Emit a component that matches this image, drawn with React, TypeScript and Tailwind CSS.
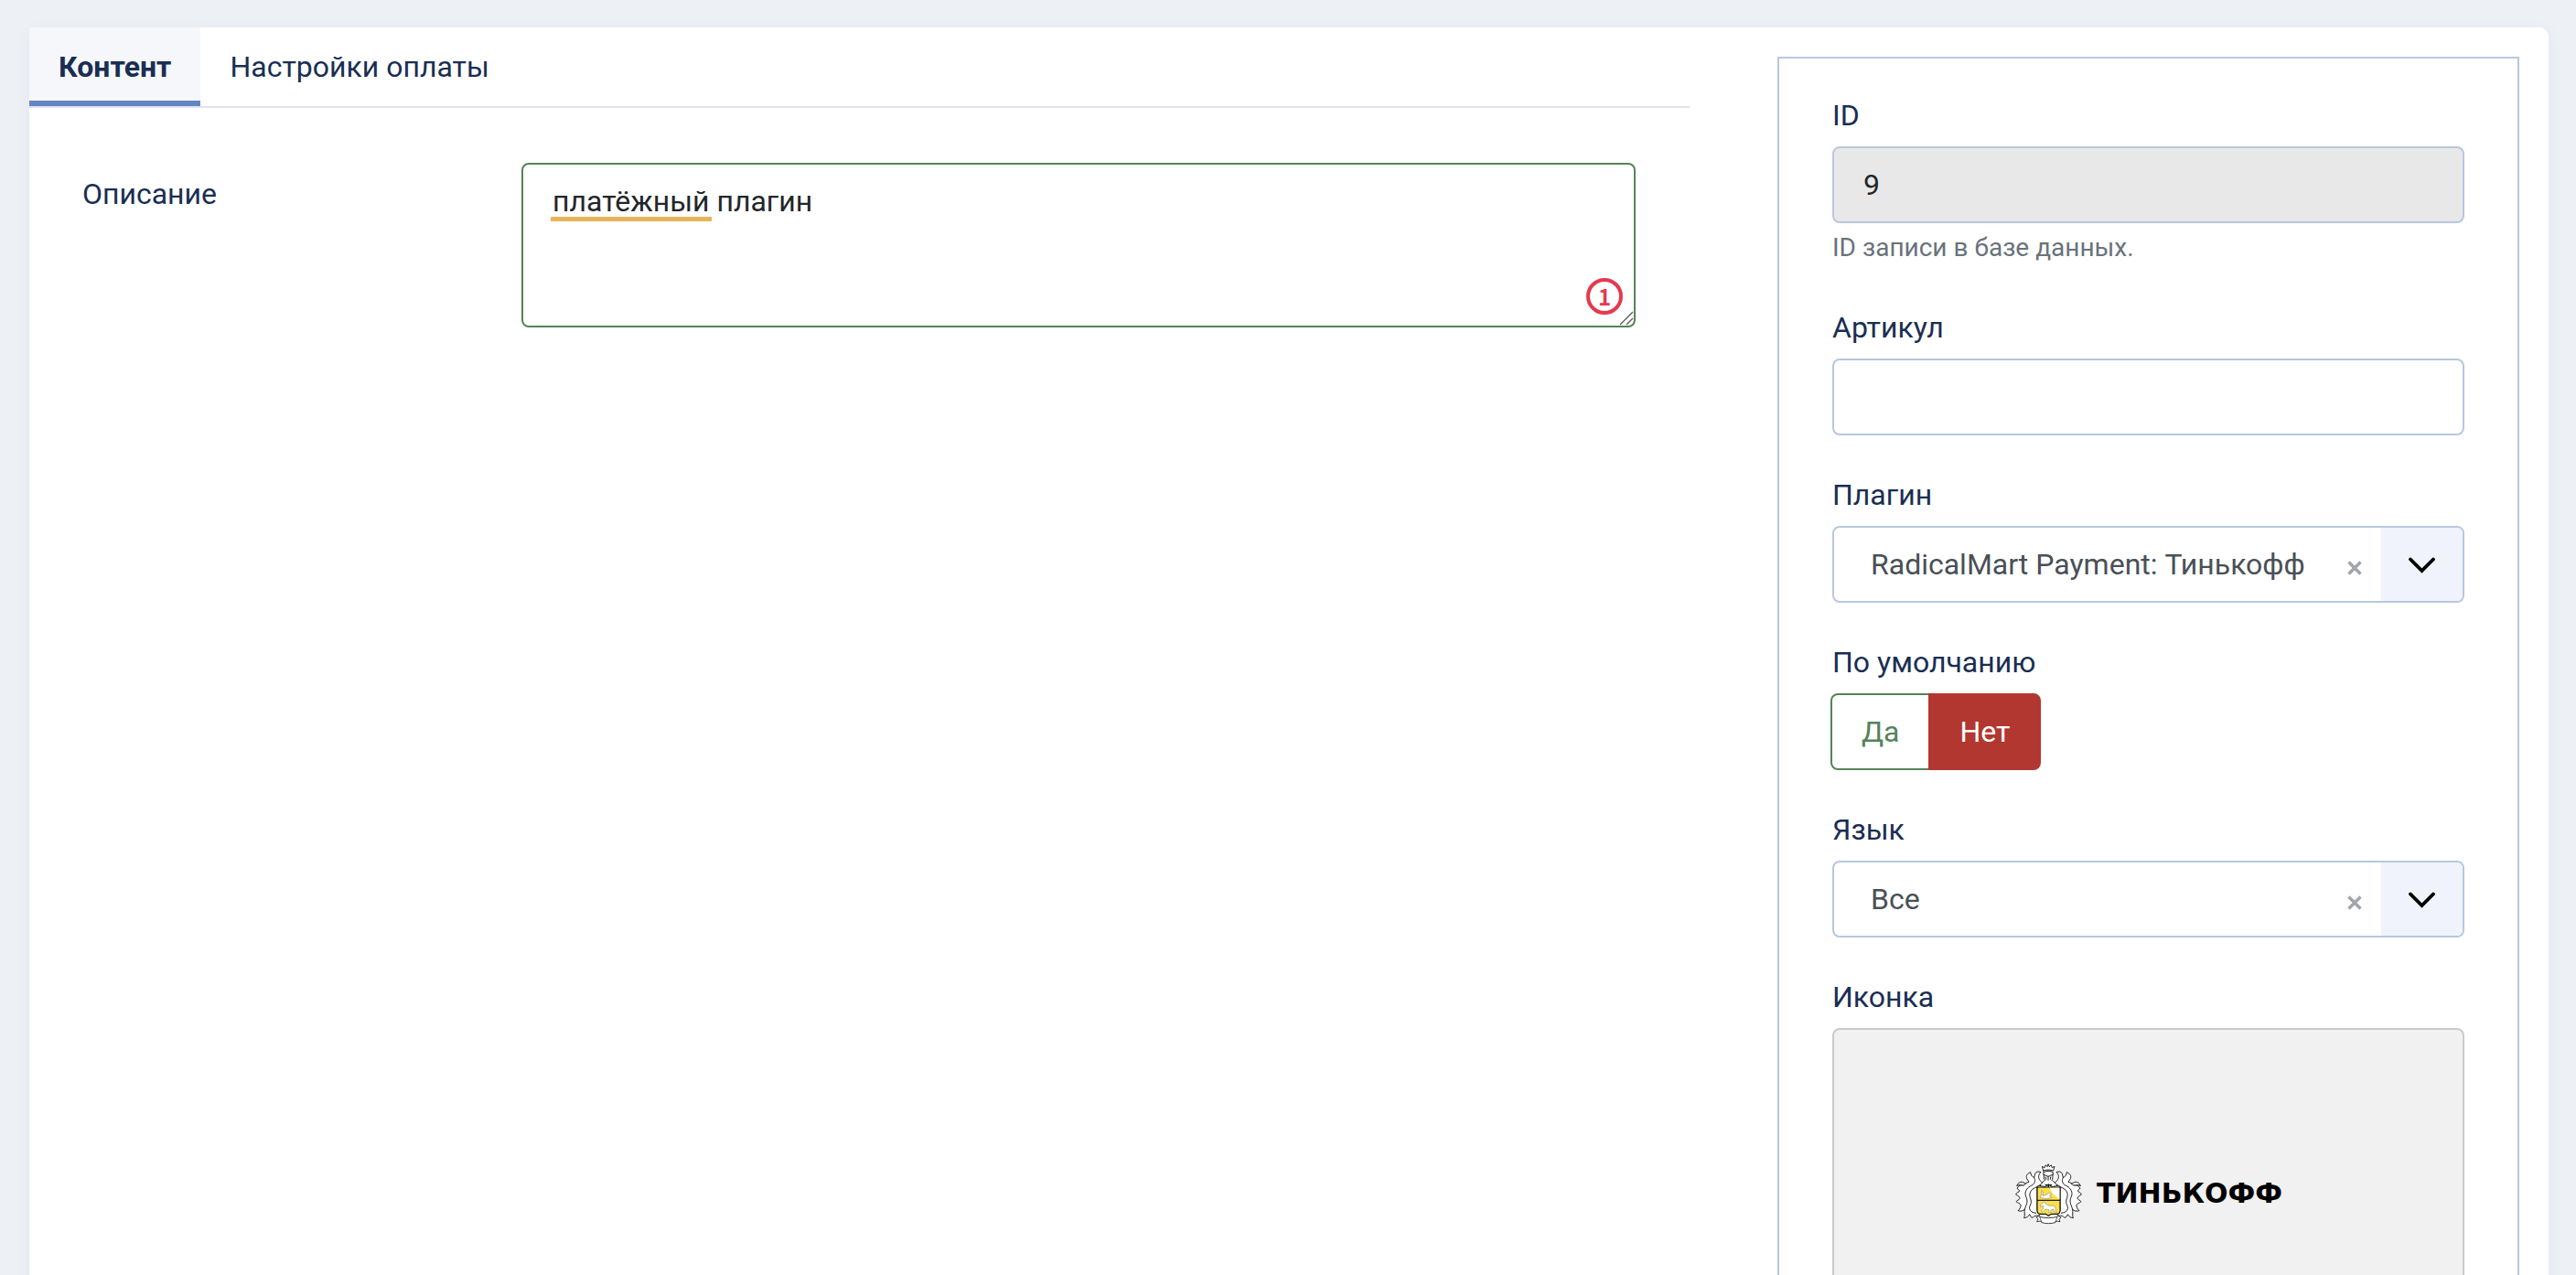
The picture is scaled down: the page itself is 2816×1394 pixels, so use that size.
import { useState, type ReactNode } from "react";

interface FieldProps {
  label: string;
  htmlFor?: string;
  children: ReactNode;
}

function Field({ label, htmlFor, children }: FieldProps) {
  return (
    <div>
      <label htmlFor={htmlFor} className="mb-2.5 block w-fit text-[32px] leading-12 text-[#1a2e53]">
        {label}
      </label>
      {children}
    </div>
  );
}

interface FancySelectProps {
  id: string;
  options: string[];
}

function FancySelect({ id, options }: FancySelectProps) {
  return (
    <div className="relative h-21 overflow-hidden rounded-lg border-2 border-[#b8c7e0] bg-white">
      <select
        id={id}
        className="h-full w-full appearance-none bg-transparent pr-36 pl-10 text-[32px] leading-12 text-[#495057] outline-none"
      >
        {options.map((option) => (
          <option key={option}>{option}</option>
        ))}
      </select>
      <button
        type="button"
        aria-label="Очистить"
        className="absolute inset-y-0 right-[90px] flex w-14 items-center justify-center pt-2 text-[#a1a5a9]"
      >
        <svg width="16" height="16" viewBox="0 0 16 16" fill="none" stroke="currentColor" strokeWidth="3.4">
          <path d="M1.5 1.5l13 13M14.5 1.5l-13 13" />
        </svg>
      </button>
      <span className="pointer-events-none absolute inset-y-0 right-0 flex w-[89px] items-center justify-center bg-[#f0f3fb] pt-0.5 text-black">
        <svg width="30" height="18" viewBox="0 0 30 18" fill="none" stroke="currentColor" strokeWidth="3.8" strokeLinecap="round">
          <path d="M2 2.500L14.500 15L27 2.500" />
        </svg>
      </span>
    </div>
  );
}

// Левая половина намёта, правая получается отражением
function Mantling() {
  return (
    <g>
      <path
        d="M121 86C112 78 106 70 108 62C109 56 112 53 115 50C106 46 99 48 96 55C94 60 95 64 93 67C87 66 82 59 81 50C74 52 66 60 68 68C69 73 74 77 76 82C70 84 63 86 58 93C50 91 42 94 37 103C44 107 46 110 43 114C38 117 33 119 33 123C40 127 46 131 46 136C44 141 36 142 34 146C39 151 47 152 49 157C50 164 46 171 40 176C49 179 57 177 62 172C60 181 64 191 60 200C68 199 75 195 78 188C80 194 83 198 88 199C91 196 94 193 101 192C107 194 111 190 114 188L103 176V98Z"
        fill="#fff"
      />
      <path d="M103 98C92 101 82 108 79 119C76 130 84 138 83 149C82 158 76 161 78 170C80 178 88 183 99 184" />
      <path d="M93 67C98 76 96 85 88 92C76 96 66 105 64 118C63 128 70 134 70 144C70 154 65 160 62 172" />
      <path d="M37 94C38 86 45 81 54 82L66 88C62 92 57 94 51 92C45 91 41 92 37 94Z" fill="#fff" />
    </g>
  );
}

function Emblem() {
  return (
    <svg width="74" height="68" viewBox="28 18 222 204" aria-hidden="true">
      <path d="M119 28H158V90H119ZM103 98H178V190H103Z" fill="none" stroke="#fff" strokeWidth="9" strokeLinejoin="round" />
      <g fill="none" stroke="#111" strokeWidth="2.8" strokeLinejoin="round" strokeLinecap="round">
        <Mantling />
        <g transform="translate(281 0) scale(-1 1)">
          <Mantling />
        </g>
        <path d="M123 45L119 31L127 35L131 26L136 32L139 23L143 32L149 26L152 35L160 31L156 45C146 41 133 41 123 45Z" fill="#fff" />
        <path d="M124 50C132 45 147 45 155 50L153 74L140 88L127 74Z" fill="#fff" />
        <path d="M125 58L139 64L154 58M139 64V83M131 66L132 73M147 66L146 73" />
        <path d="M126 77L111 94L130 98L140 89L151 98L170 94L154 77" fill="#fff" />
        <path d="M130 92H150M140 92V103" strokeWidth="4" />
      </g>
      <path d="M103 99H178V176C178 184 174 187 165 187H149L140 193L131 187H116C107 187 103 184 103 176Z" fill="#fbe04a" stroke="#111" strokeWidth="3.500" />
      <path d="M144 101H176V139C169 132 159 125 151 116Z" fill="#fff" />
      <path d="M103 142H178" stroke="#111" strokeWidth="3.500" />
      <g fill="#fff" stroke="#777" strokeWidth="1.600">
        <path d="M118 109C124 111 122 121 120 126C130 128 135 123 141 117L150 122L143 127L151 133C140 137 123 137 112 133L115 128L117 121Z" />
        <path d="M121 151L127 148C131 155 137 160 148 160C158 158 164 162 163 174L168 181L160 180L156 171L148 174L147 182H141L142 173L130 171L121 180L115 177L123 169L122 159L114 163L113 158Z" />
      </g>
      <path d="M111 196C126 201 154 201 169 196L171 193L181 198L175 205L178 212L166 210L162 215C148 219 131 219 118 215L114 210L102 212L106 204L100 197L110 193Z" fill="#fff" stroke="#111" strokeWidth="2.400" strokeLinejoin="round" />
      <path d="M111 196L118 215M169 196L162 215" stroke="#111" strokeWidth="2" />
    </svg>
  );
}

const tabs = ["Контент", "Настройки оплаты"];

export default function App() {
  const [activeTab, setActiveTab] = useState(tabs[0]);
  const [isDefault, setIsDefault] = useState(false);

  return (
    <div className="h-screen overflow-hidden bg-[#edf0f5] pt-[30px] pr-[30px] pl-8 font-[Roboto,sans-serif] text-[32px] leading-12 text-[#1a2e53]">
      <div className="grid grid-cols-[1815fr_811fr] gap-24 rounded-[10px] bg-white pr-8 pb-8 shadow-[0_4px_20px_rgba(26,70,107,0.05)]">
        <main className="min-w-0">
          <div role="tablist" className="flex border-b-2 border-[#dfe3f0]">
            {tabs.map((tab) => (
              <button
                key={tab}
                type="button"
                role="tab"
                aria-selected={tab === activeTab}
                onClick={() => setActiveTab(tab)}
                className={
                  tab === activeTab
                    ? "h-[86px] border-b-6 border-[#6385c3] bg-[#f5f7fb] px-8 pt-1.5 font-bold"
                    : "h-[86px] px-8"
                }
              >
                {tab}
              </button>
            ))}
          </div>

          <div className="grid grid-cols-[480px_1fr] pt-15 pr-[59px] pl-[58px]">
            <label htmlFor="description" className="pt-2.5">
              Описание
            </label>
            <div className="relative">
              <textarea
                id="description"
                rows={3}
                spellCheck={false}
                defaultValue="платёжный плагин"
                className="block w-full resize-none rounded-lg border-2 border-[#568259] bg-white px-8 py-4 text-[#22262a] outline-none"
              />
              <span className="pointer-events-none absolute top-[59px] left-8 h-[5px] w-44 bg-[#e7b45c]" />
              <span className="absolute right-3.5 bottom-3.5 flex size-10 items-center justify-center rounded-full border-4 border-[#e5394f] font-['Noto_Sans_CJK_SC',sans-serif] text-2xl leading-none font-bold text-[#e5394f]">
                1
              </span>
              <svg
                className="pointer-events-none absolute right-0.5 bottom-0.5"
                width="16"
                height="16"
                viewBox="0 0 16 16"
                stroke="#5c5c5c"
                strokeWidth="1.400"
              >
                <path d="M1 15L15 1M8 15L15 8" />
              </svg>
            </div>
          </div>
        </main>

        <aside className="mt-8 min-w-0 border-2 border-[#b8c7e0] px-[58px] pt-[38px] pb-10">
          <div className="flex flex-col gap-[41px]">
            <Field label="ID" htmlFor="record-id">
              <input
                id="record-id"
                readOnly
                defaultValue="9"
                aria-describedby="record-id-help"
                className="block h-21 w-full rounded-lg border-2 border-[#b8c7e0] bg-[#e8e8e8] px-8 text-[#22262a] outline-none"
              />
              <p id="record-id-help" className="mt-1 text-[28px] leading-[45px] text-[#6a727b]">
                ID записи в базе данных.
              </p>
            </Field>

            <Field label="Артикул" htmlFor="sku">
              <input
                id="sku"
                className="block h-21 w-full rounded-lg border-2 border-[#b8c7e0] bg-white px-8 text-[#22262a] outline-none"
              />
            </Field>

            <Field label="Плагин" htmlFor="plugin">
              <FancySelect id="plugin" options={["RadicalMart Payment: Тинькофф"]} />
            </Field>

            <Field label="По умолчанию">
              <div role="radiogroup" aria-label="По умолчанию" className="-ml-0.5 flex">
                <label
                  className={
                    isDefault
                      ? "relative flex h-21 items-center rounded-l-lg border-2 border-[#568259] bg-[#568259] px-8 text-white"
                      : "relative flex h-21 items-center rounded-l-lg border-2 border-[#568259] bg-white px-8 text-[#568259]"
                  }
                >
                  <input
                    type="radio"
                    name="default"
                    className="sr-only"
                    checked={isDefault}
                    onChange={() => setIsDefault(true)}
                  />
                  Да
                </label>
                <label
                  className={
                    isDefault
                      ? "relative -ml-0.5 flex h-21 items-center rounded-r-lg border-2 border-[#b23730] bg-white px-8 text-[#b23730]"
                      : "relative -ml-0.5 flex h-21 items-center rounded-r-lg border-2 border-[#b23730] bg-[#b23730] px-8 text-white"
                  }
                >
                  <input
                    type="radio"
                    name="default"
                    className="sr-only"
                    checked={!isDefault}
                    onChange={() => setIsDefault(false)}
                  />
                  Нет
                </label>
              </div>
            </Field>

            <Field label="Язык" htmlFor="language">
              <FancySelect id="language" options={["Все"]} />
            </Field>

            <Field label="Иконка">
              <div className="flex h-[362px] items-center justify-center gap-4 rounded-lg border-2 border-[#cbcbcb] bg-[#f1f1f1]">
                <Emblem />
                <span className="font-['DejaVu_Sans',sans-serif] text-[30px] leading-none font-bold text-black">
                  ТИНЬКОФФ
                </span>
              </div>
            </Field>
          </div>
        </aside>
      </div>
    </div>
  );
}
